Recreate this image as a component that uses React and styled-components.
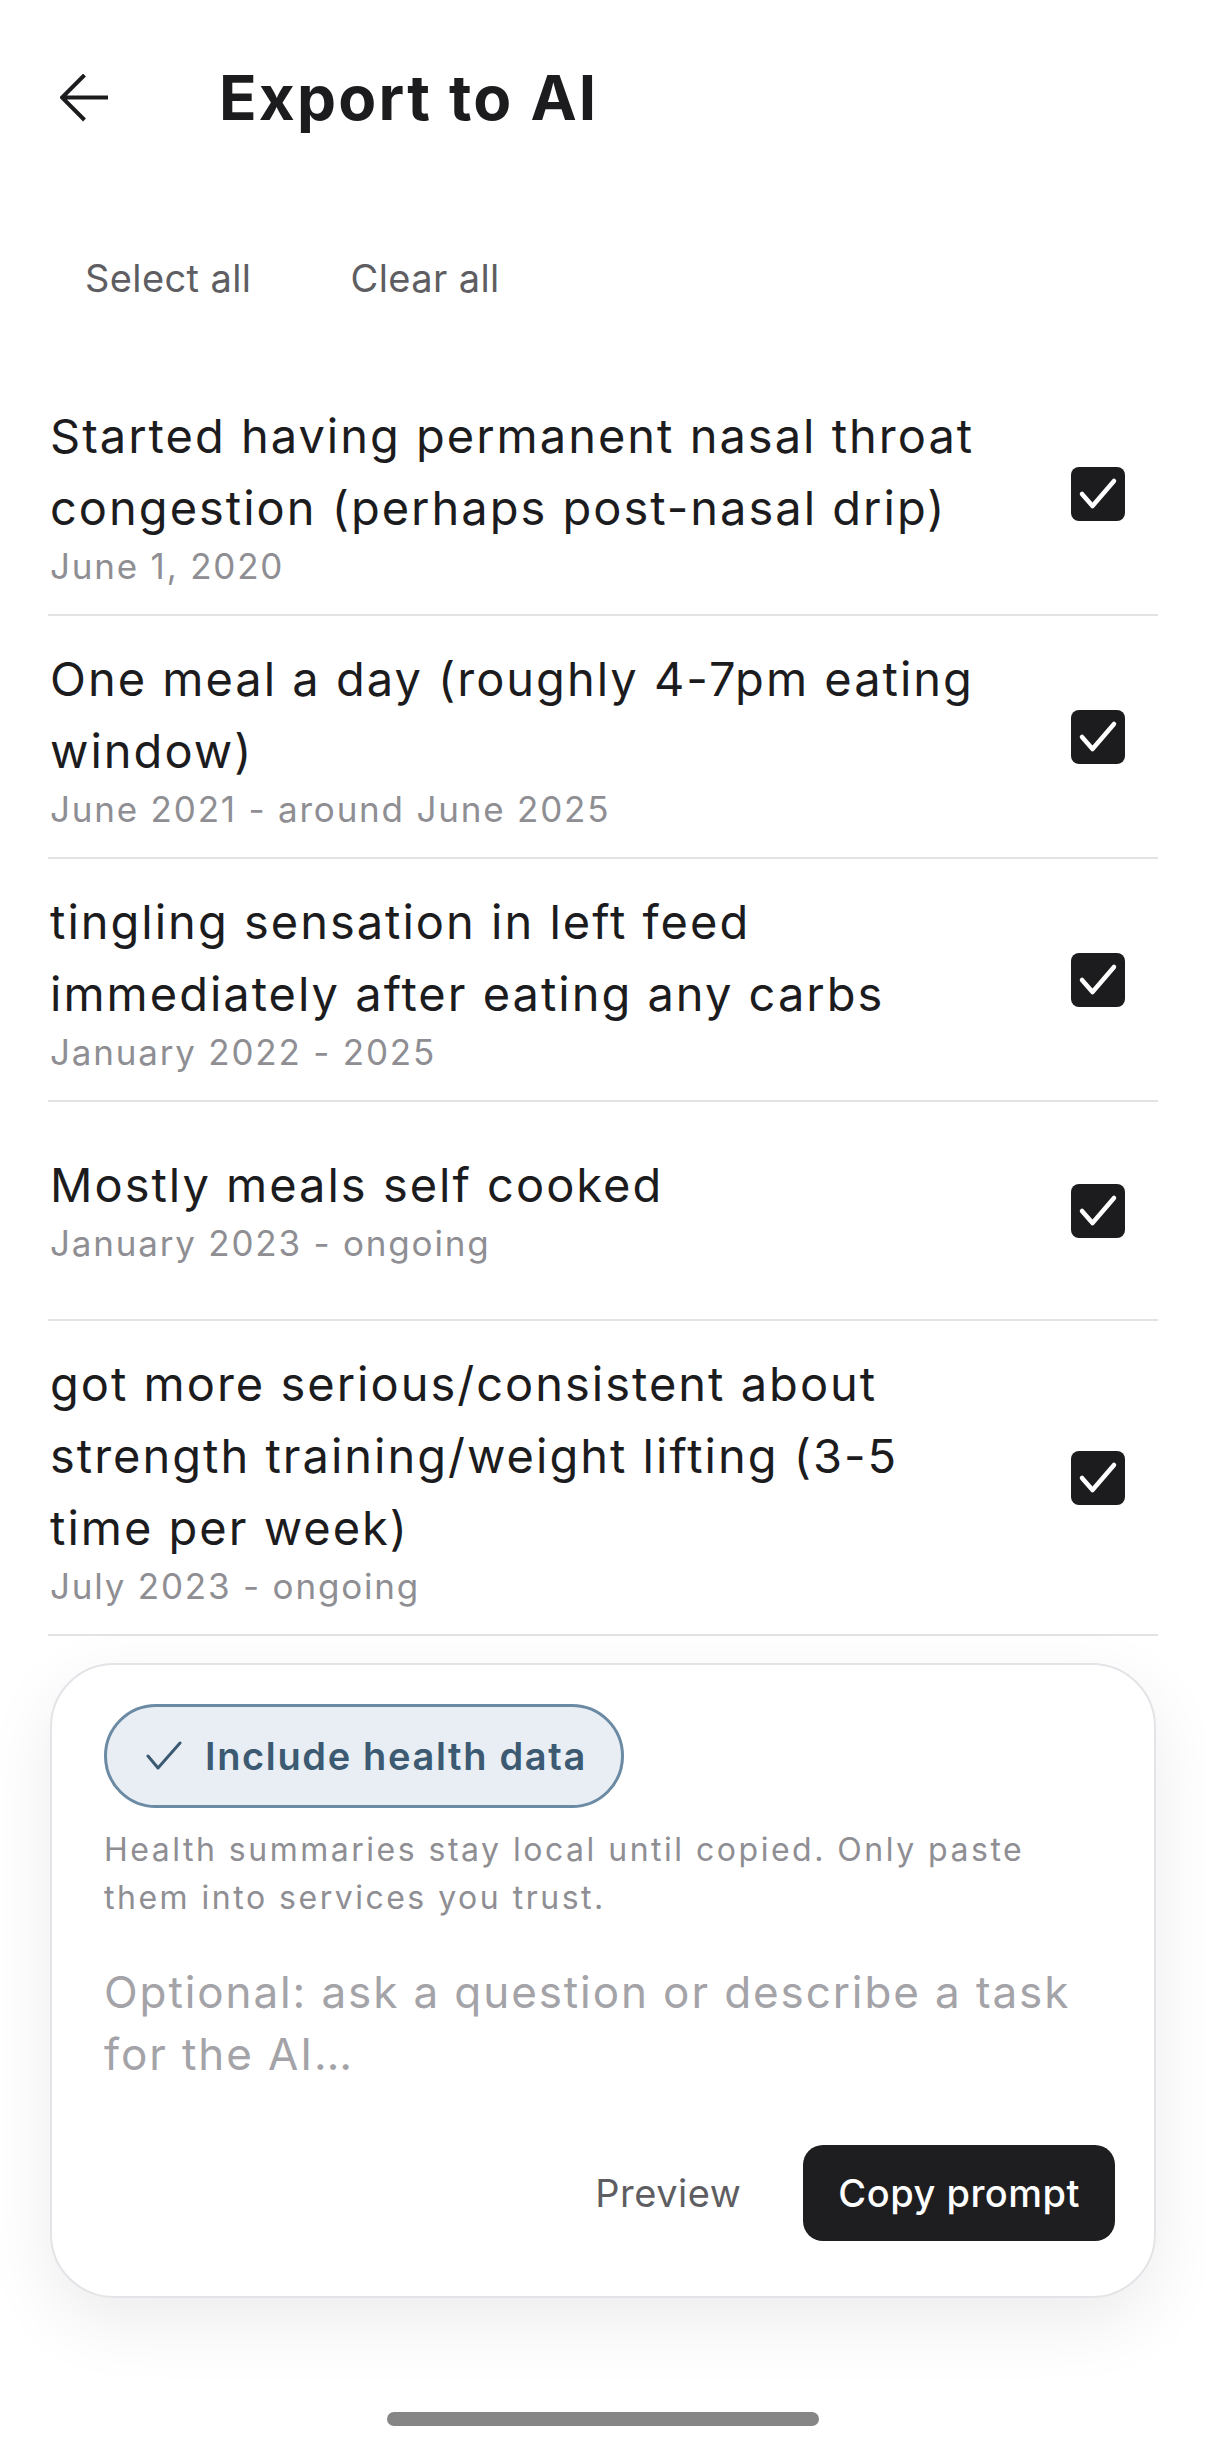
import React from "react";
import styled, { createGlobalStyle } from "styled-components";

const GlobalStyle = createGlobalStyle`
  * { box-sizing: border-box; }
  html, body { margin: 0; padding: 0; background: #ffffff; }
  body {
    font-family: Inter, "Noto Sans", sans-serif;
    color: #1c1c1e;
    -webkit-font-smoothing: antialiased;
  }
`;

const Screen = styled.div`
  width: 1206px;
  min-height: 2451px;
  display: flex;
  flex-direction: column;
  background: #ffffff;
`;

const Header = styled.header`
  height: 196px;
  display: flex;
  align-items: center;
  padding-left: 60px;
  gap: 111px;
`;

const BackButton = styled.button`
  width: 48px;
  height: 48px;
  padding: 0;
  border: none;
  background: none;
  display: flex;
  color: #1c1c1e;
`;

const Title = styled.h1`
  margin: 0;
  font-size: 62px;
  font-weight: 700;
  line-height: 1;
  letter-spacing: 2.2px;
  color: #1c1c1e;
`;

const ActionBar = styled.div`
  height: 164px;
  display: flex;
  align-items: center;
  padding-left: 85px;
  gap: 99px;
`;

const TextButton = styled.button`
  padding: 0;
  border: none;
  background: none;
  font-family: inherit;
  font-size: ${(p) => p.$size || 38}px;
  font-weight: 400;
  letter-spacing: ${(p) => p.$spacing ?? 0.4}px;
  color: #5e5e62;
`;

const List = styled.ul`
  list-style: none;
  margin: 13px 0 0;
  padding: 0 48px;
`;

const Row = styled.li`
  display: flex;
  align-items: center;
  gap: 80px;
  min-height: ${(p) => p.$minHeight || 0}px;
  padding: 27px 33px 26px 2px;
  border-bottom: 2px solid #e3e3e6;
`;

const RowText = styled.div`
  flex: 1;
  min-width: 0;
  display: flex;
  flex-direction: column;
  margin-top: ${(p) => (p.$raised ? -8 : 0)}px;
`;

const ItemTitle = styled.div`
  font-size: 47px;
  line-height: 72px;
  letter-spacing: 2px;
  color: #1c1c1e;
`;

const ItemDate = styled.div`
  font-size: 35px;
  line-height: 44px;
  letter-spacing: 1.8px;
  color: #8e8e93;
`;

const CheckBox = styled.span`
  flex: none;
  width: 54px;
  height: 54px;
  border-radius: 8px;
  background: #1c1c1e;
  display: flex;
  align-items: center;
  justify-content: center;
`;

const Card = styled.section`
  margin: 27px 50px 0;
  padding: 39px 39px 55px 52px;
  border: 2px solid #e4e4e8;
  border-radius: 64px;
  background: #ffffff;
  box-shadow: 0 24px 70px rgba(0, 0, 0, 0.08);
  display: flex;
  flex-direction: column;
`;

const Chip = styled.button`
  align-self: flex-start;
  height: 104px;
  display: inline-flex;
  align-items: center;
  gap: 23px;
  padding: 0 34px 0 39px;
  border: 3px solid #6b8aa3;
  border-radius: 52px;
  background: #e8eef3;
  color: #3c5a72;
  font-family: inherit;
  font-size: 38px;
  font-weight: 600;
  letter-spacing: 1.65px;
`;

const Helper = styled.p`
  margin: 18px 0 0;
  padding-right: 24px;
  font-size: 32px;
  line-height: 48px;
  letter-spacing: 2.5px;
  color: #8e8e93;
`;

const Prompt = styled.textarea`
  margin-top: 39px;
  width: 100%;
  height: 124px;
  padding: 0;
  border: none;
  outline: none;
  resize: none;
  overflow: hidden;
  background: transparent;
  font-family: inherit;
  font-size: 44px;
  line-height: 62px;
  letter-spacing: 1.9px;
  color: #1c1c1e;
  &::placeholder {
    color: #a3a3a8;
  }
`;

const Actions = styled.div`
  margin-top: 60px;
  display: flex;
  justify-content: flex-end;
  align-items: center;
  gap: 62px;
`;

const PrimaryButton = styled.button`
  height: 96px;
  padding: 0 35px;
  border: none;
  border-radius: 20px;
  background: #1e1e20;
  color: #ffffff;
  font-family: inherit;
  font-size: 38px;
  font-weight: 500;
  letter-spacing: 0.5px;
`;

const HomeIndicator = styled.div`
  margin: 114px auto 0;
  width: 432px;
  height: 14px;
  border-radius: 7px;
  background: #868686;
`;

const items = [
  {
    title: "Started having permanent nasal throat congestion (perhaps post-nasal drip)",
    date: "June 1, 2020",
  },
  {
    title: "One meal a day (roughly 4-7pm eating window)",
    date: "June 2021 - around June 2025",
  },
  {
    title: "tingling sensation in left feed immediately after eating any carbs",
    date: "January 2022 - 2025",
  },
  {
    title: "Mostly meals self cooked",
    date: "January 2023 - ongoing",
    minHeight: 219,
    raised: true,
  },
  {
    title: "got more serious/consistent about strength training/weight lifting (3-5 time per week)",
    date: "July 2023 - ongoing",
  },
];

const ArrowLeft = () => (
  <svg width="48" height="48" viewBox="0 0 48 48" fill="none">
    <path d="M48 23.5H2M24.5 1L2 23.5L24.5 46" stroke="currentColor" strokeWidth="4" />
  </svg>
);

const Check = () => (
  <svg width="54" height="54" viewBox="0 0 54 54" fill="none">
    <path
      d="M11 27L21.5 39L43 14"
      stroke="#ffffff"
      strokeWidth="4.5"
      strokeLinecap="round"
      strokeLinejoin="round"
    />
  </svg>
);

const ThinCheck = () => (
  <svg width="36" height="30" viewBox="0 0 36 30" fill="none">
    <path
      d="M2 15L12 27L34 2"
      stroke="currentColor"
      strokeWidth="3"
      strokeLinecap="round"
      strokeLinejoin="round"
    />
  </svg>
);

export default function App() {
  return (
    <>
      <GlobalStyle />
      <Screen>
        <Header>
          <BackButton aria-label="Back">
            <ArrowLeft />
          </BackButton>
          <Title>Export to AI</Title>
        </Header>
        <ActionBar>
          <TextButton>Select all</TextButton>
          <TextButton>Clear all</TextButton>
        </ActionBar>
        <List>
          {items.map((it) => (
            <Row key={it.title} $minHeight={it.minHeight}>
              <RowText $raised={it.raised}>
                <ItemTitle>{it.title}</ItemTitle>
                <ItemDate>{it.date}</ItemDate>
              </RowText>
              <CheckBox>
                <Check />
              </CheckBox>
            </Row>
          ))}
        </List>
        <Card>
          <Chip>
            <ThinCheck />
            Include health data
          </Chip>
          <Helper>
            Health summaries stay local until copied. Only paste them into services you trust.
          </Helper>
          <Prompt placeholder="Optional: ask a question or describe a task for the AI…" />
          <Actions>
            <TextButton $size={38} $spacing={0.5}>
              Preview
            </TextButton>
            <PrimaryButton>Copy prompt</PrimaryButton>
          </Actions>
        </Card>
        <HomeIndicator />
      </Screen>
    </>
  );
}
